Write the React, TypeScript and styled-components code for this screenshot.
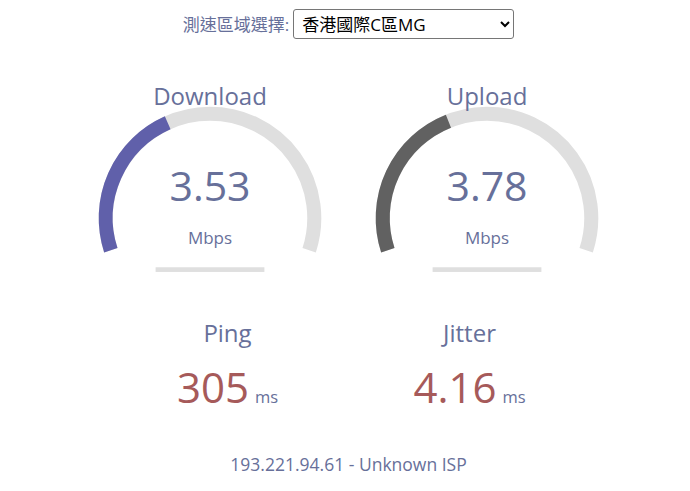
import React from "react";
import styled, { createGlobalStyle } from "styled-components";

const palette = {
  text: "#67709a",
  red: "#a65a5a",
  download: "#6060aa",
  upload: "#616161",
  track: "#dfdfdf",
};

const GlobalStyle = createGlobalStyle`
  html, body {
    margin: 0;
    padding: 0;
    background: #ffffff;
  }
  body {
    font-family: "Open Sans", "Noto Sans CJK TC", sans-serif;
    color: ${palette.text};
  }
`;

const Page = styled.div`
  width: 690px;
  padding: 9px 0 0 7px;
  box-sizing: border-box;
  text-align: center;
`;

const ServerRow = styled.div`
  display: flex;
  justify-content: center;
  align-items: center;
  gap: 4px;
  height: 30px;
`;

const ServerLabel = styled.label`
  font-size: 17px;
  line-height: 1;
  color: ${palette.text};
`;

const ServerSelect = styled.select`
  width: 221px;
  height: 30px;
  font-family: "Open Sans", "Noto Sans CJK TC", sans-serif;
  font-size: 17px;
  color: #000;
  background: #fff;
  border: 1px solid #767676;
  border-radius: 3px;
  padding: 0 4px;
`;

const GaugeGroup = styled.div`
  display: flex;
  justify-content: center;
  gap: 5px;
  margin-top: 34px;
`;

const GaugeArea = styled.div`
  position: relative;
  width: 272px;
  height: 213px;
  svg {
    display: block;
  }
`;

const Readout = styled.div`
  position: absolute;
  inset: 0;
  display: flex;
  flex-direction: column;
  align-items: center;
  padding-top: 11px;
`;

const TestName = styled.div`
  font-size: 24px;
  line-height: 1;
  height: 24px;
`;

const MeterText = styled.div`
  font-size: 41px;
  line-height: 1;
  margin-top: 57px;
`;

const Unit = styled.div`
  font-size: 17px;
  line-height: 1;
  margin-top: 23px;
`;

const SmallGroup = styled.div`
  display: flex;
  justify-content: center;
  gap: 4px;
  margin-top: 35px;
`;

const SmallArea = styled.div`
  width: 238px;
  display: flex;
  flex-direction: column;
  align-items: center;
`;

const ValueRow = styled.div`
  display: flex;
  align-items: baseline;
  gap: 6px;
  margin-top: 21px;
  color: ${palette.red};
`;

const BigValue = styled.span`
  font-size: 42px;
  line-height: 1;
`;

const SmallUnit = styled.span`
  font-size: 16.5px;
  color: ${palette.text};
`;

const IpInfo = styled.div`
  margin-top: 48px;
  font-size: 17.5px;
  line-height: 1;
`;

const W = 272;
const H = 213;

// same geometry as the canvas meter: 216 degree arc, bar under it
const Gauge: React.FC<{ amount: number; color: string }> = ({ amount, color }) => {
  const s = H * 0.0055;
  const lw = 12 * s;
  const cx = W / 2;
  const cy = H - 58 * s;
  const r = H / 1.8 - lw;
  const a0 = -Math.PI * 1.1;
  const pt = (a: number) => `${(cx + r * Math.cos(a)).toFixed(2)} ${(cy + r * Math.sin(a)).toFixed(2)}`;
  const arc = (from: number, to: number) =>
    `M ${pt(from)} A ${r} ${r} 0 ${to - from > Math.PI ? 1 : 0} 1 ${pt(to)}`;
  return (
    <svg width={W} height={H} viewBox={`0 0 ${W} ${H}`}>
      <path d={arc(a0, Math.PI * 0.1)} stroke={palette.track} strokeWidth={lw} fill="none" />
      <path d={arc(a0, a0 + amount * Math.PI * 1.2)} stroke={color} strokeWidth={lw} fill="none" />
      <rect x={W * 0.3} y={H - 16 * s} width={W * 0.4} height={4 * s} fill={palette.track} />
    </svg>
  );
};

const mbpsToAmount = (v: number) => 1 - 1 / Math.pow(1.3, Math.sqrt(v));

const meters = [
  { name: "Download", value: 3.53, color: palette.download },
  { name: "Upload", value: 3.78, color: palette.upload },
];

const latency = [
  { name: "Ping", value: "305" },
  { name: "Jitter", value: "4.16" },
];

const App: React.FC = () => {
  return (
    <Page>
      <GlobalStyle />
      <ServerRow>
        <ServerLabel htmlFor="server">測速區域選擇:</ServerLabel>
        <ServerSelect id="server" defaultValue="hk-c">
          <option value="hk-c">香港國際C區MG</option>
        </ServerSelect>
      </ServerRow>
      <GaugeGroup>
        {meters.map((m) => (
          <GaugeArea key={m.name}>
            <Gauge amount={mbpsToAmount(m.value)} color={m.color} />
            <Readout>
              <TestName>{m.name}</TestName>
              <MeterText>{m.value.toFixed(2)}</MeterText>
              <Unit>Mbps</Unit>
            </Readout>
          </GaugeArea>
        ))}
      </GaugeGroup>
      <SmallGroup>
        {latency.map((l) => (
          <SmallArea key={l.name}>
            <TestName>{l.name}</TestName>
            <ValueRow>
              <BigValue>{l.value}</BigValue>
              <SmallUnit>ms</SmallUnit>
            </ValueRow>
          </SmallArea>
        ))}
      </SmallGroup>
      <IpInfo>193.221.94.61 - Unknown ISP</IpInfo>
    </Page>
  );
};

export default App;
